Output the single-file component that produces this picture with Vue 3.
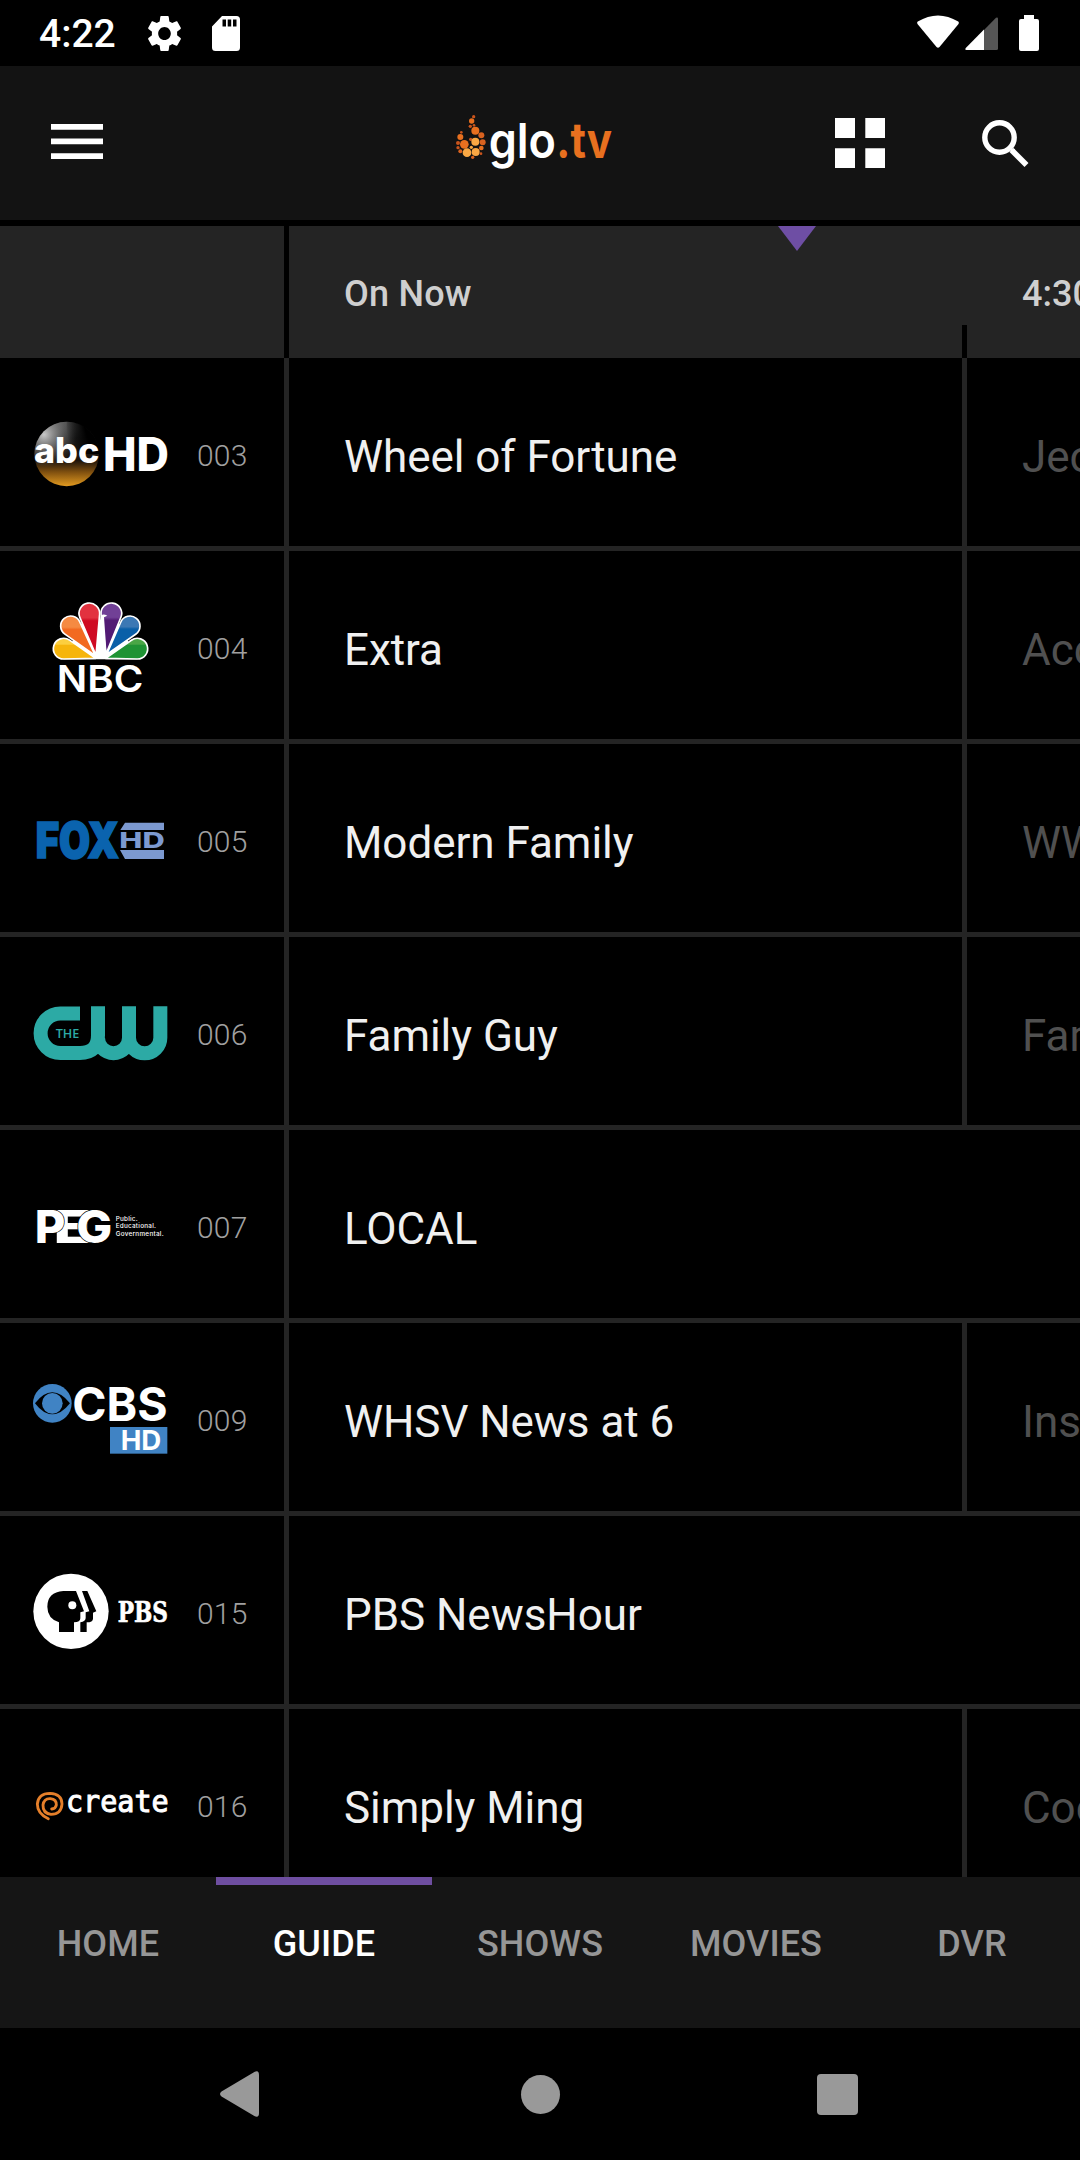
<template>
  <div class="screen">
    <div class="status-bar">
      <span class="clock">4:22</span>
      <svg class="gear" viewBox="2.6 2.4 18.8 19.2" preserveAspectRatio="none">
        <path fill="#fff" d="M19.14 12.94c.04-.3.06-.61.06-.94 0-.32-.02-.64-.07-.94l2.03-1.58c.18-.14.23-.41.12-.61l-1.92-3.32c-.12-.22-.37-.29-.59-.22l-2.39.96c-.5-.38-1.03-.7-1.62-.94l-.36-2.54c-.04-.24-.24-.41-.48-.41h-3.84c-.24 0-.43.17-.47.41l-.36 2.54c-.59.24-1.13.57-1.62.94l-2.39-.96c-.22-.08-.47 0-.59.22L2.74 8.87c-.12.21-.08.47.12.61l2.03 1.58c-.05.3-.09.63-.09.94s.02.64.07.94l-2.03 1.58c-.18.14-.23.41-.12.61l1.92 3.32c.12.22.37.29.59.22l2.39-.96c.5.38 1.03.7 1.62.94l.36 2.54c.05.24.24.41.48.41h3.84c.24 0 .44-.17.47-.41l.36-2.54c.59-.24 1.13-.56 1.62-.94l2.39.96c.22.08.47 0 .59-.22l1.92-3.32c.12-.22.07-.47-.12-.61l-2.01-1.58zM12 15.6c-1.98 0-3.6-1.62-3.6-3.6s1.62-3.6 3.6-3.6 3.6 1.62 3.6 3.6-1.62 3.6-3.6 3.6z" />
      </svg>
      <svg class="sd-card" viewBox="0 0 28 35">
        <path fill="#fff" fill-rule="evenodd" d="M10 0H24.5Q28 0 28 3.5V31.500Q28 35 24.500 35H3.500Q0 35 0 31.500V10.500ZM10.500 3.500V10.500H14V3.500ZM15.700 3.500V10.500H19.200V3.500ZM21 3.500V10.500H24.500V3.500Z" />
      </svg>
      <svg class="wifi" viewBox="0 0 42 33">
        <path fill="#fff" d="M.8 6.500Q21 -5.500 41.200 6.500Q42.300 7.500 41.500 9L22.500 32Q21 33.500 19.500 32L.5 9Q-.3 7.500 .8 6.500Z" />
      </svg>
      <svg class="signal" viewBox="0 0 33 33">
        <path fill="#565656" d="M19 13L31 .8Q33 0 33 2V31.500Q33 33 31.500 33H19Z" />
        <path fill="#fff" d="M19 12.500V33H1.500Q-.5 33 .8 31Z" />
      </svg>
      <svg class="battery" viewBox="0 0 20 36">
        <path fill="#fff" d="M5 0H15V4H18Q20 4 20 6V34Q20 36 18 36H2Q0 36 0 34V6Q0 4 2 4H5Z" />
      </svg>
    </div>

    <header class="app-bar">
      <svg class="menu-icon" viewBox="0 0 52 35">
        <path fill="#fff" d="M0 0H52V5.700H0ZM0 14.500H52V20.200H0ZM0 29.200H52V35H0Z" />
      </svg>
      <svg class="brand" viewBox="0 0 660 300">
        <circle v-for="(dot, i) in flameDots" :key="i" :cx="dot[0]" :cy="dot[1]" :r="dot[2]" :fill="dot[3]" />
        <text class="brand-text" x="176" y="204" textLength="202" lengthAdjust="spacingAndGlyphs" fill="#fff">glo</text>
        <text class="brand-text brand-tv" x="379" y="204" textLength="167" lengthAdjust="spacingAndGlyphs" fill="#e8701f">.tv</text>
      </svg>
      <svg class="grid-icon" viewBox="0 0 50 50">
        <path fill="#fff" d="M0 0H20V20H0ZM30.300 0H50V20H30.300ZM0 30.300H20V50H0ZM30.300 30.300H50V50H30.300Z" />
      </svg>
      <svg class="search-icon" viewBox="0 0 47 47">
        <circle cx="17.500" cy="17.500" r="14.700" fill="none" stroke="#fff" stroke-width="5.400" />
        <path d="M29.500 30L44.500 45" stroke="#fff" stroke-width="5.600" />
        <circle cx="31" cy="31" r="2.400" fill="#fff" />
      </svg>
    </header>

    <div class="time-row">
      <div class="time-corner"></div>
      <div class="time-line">
        <span class="time-now">On Now</span>
        <span class="time-next">4:30 PM</span>
        <i class="now-marker"></i>
        <i class="time-tick"></i>
      </div>
    </div>

    <main class="guide">
      <div v-for="channel in channels" :key="channel.number" class="guide-row">
        <div class="channel">
          <svg v-if="channel.logo === 'abc'" class="logo" viewBox="90 -66 420 564">
            <defs>
              <linearGradient id="abcBase" x1="0" y1="0" x2="0" y2="1">
                <stop offset="0" stop-color="#4a4a4a" />
                <stop offset=".25" stop-color="#202020" />
                <stop offset=".6" stop-color="#1c130b" />
                <stop offset=".78" stop-color="#80500f" />
                <stop offset="1" stop-color="#e39b20" />
              </linearGradient>
              <radialGradient id="abcShine" cx=".15" cy=".2" r=".5">
                <stop offset="0" stop-color="#c8c8c8" />
                <stop offset="1" stop-color="#777" stop-opacity="0" />
              </radialGradient>
              <linearGradient id="abcShade" x1="0" y1=".4" x2=".7" y2=".2">
                <stop offset="0" stop-color="#000" stop-opacity="0" />
                <stop offset=".8" stop-color="#000" />
              </linearGradient>
            </defs>
            <circle cx="200" cy="222" r="97" fill="url(#abcBase)" />
            <circle cx="200" cy="222" r="97" fill="url(#abcShine)" />
            <path d="M200 124A98 98 0 0 1 298 222H200Z" fill="url(#abcShade)" />
            <text class="geo" x="102" y="250" font-size="105" textLength="196" lengthAdjust="spacingAndGlyphs">abc</text>
            <text class="geo" x="309" y="273" font-size="140" textLength="198" lengthAdjust="spacingAndGlyphs">HD</text>
          </svg>

          <svg v-else-if="channel.logo === 'nbc'" class="logo" viewBox="90 -57 420 564">
            <defs>
              <linearGradient v-for="f in feathers" :id="f.id" :key="f.id" x1="0" y1="0" x2="0" y2="1">
                <stop offset="0" :stop-color="f.light" />
                <stop offset=".28" :stop-color="f.light" />
                <stop offset=".34" :stop-color="f.dark" />
                <stop offset="1" :stop-color="f.dark" />
              </linearGradient>
            </defs>
            <path d="M190 268H413L340 130L302 150L260 130Z" fill="#fff" />
            <path v-for="f in feathers" :key="f.id" :d="featherPath(f)" :fill="`url(#${f.id})`" stroke="#fff" stroke-width="5" stroke-linejoin="round" />
            <path d="M285 266L301 143Q304 128 322 137L312 142L321 266Z" fill="#fff" />
            <text class="mont" x="170" y="365" font-size="110" textLength="260" lengthAdjust="spacingAndGlyphs">NBC</text>
          </svg>

          <svg v-else-if="channel.logo === 'fox'" class="logo" viewBox="90 -108 420 564">
            <text class="fox" x="107" y="235" font-size="147" textLength="250" lengthAdjust="spacingAndGlyphs">FOX</text>
            <path d="M375 128H492V150H361ZM360 210H492V237H375Z" fill="#7c99d0" />
            <text class="fox-hd" x="358" y="204" font-size="65" textLength="136" lengthAdjust="spacingAndGlyphs">HD</text>
          </svg>

          <svg v-else-if="channel.logo === 'cw'" class="logo" viewBox="90 -99 420 564">
            <path d="M240 130.500H181A59 59 0 0 0 181 249H240Q294 249 294 196V109M294 203A46.500 46.500 0 0 0 387 203V109M387 203A47 47 0 0 0 481 203V109" fill="none" stroke="#2caaa5" stroke-width="42" />
            <text class="the" x="167" y="204" font-size="38" textLength="71" lengthAdjust="spacingAndGlyphs">THE</text>
          </svg>

          <svg v-else-if="channel.logo === 'peg'" class="logo" viewBox="90 -150 420 564">
            <text class="peg" x="160" y="188" font-size="136" textLength="116" lengthAdjust="spacingAndGlyphs">E</text>
            <text class="peg" x="104" y="188" font-size="136" textLength="92" lengthAdjust="spacingAndGlyphs">P</text>
            <text class="peg" x="229" y="188" font-size="136" textLength="108" lengthAdjust="spacingAndGlyphs">G</text>
            <text class="peg-small" x="347" y="122" font-size="19" textLength="66">Public.</text>
            <text class="peg-small" x="347" y="145" font-size="19" textLength="121">Educational.</text>
            <text class="peg-small" x="347" y="168" font-size="19" textLength="144">Governmental.</text>
          </svg>

          <svg v-else-if="channel.logo === 'cbs'" class="logo" viewBox="90 -111 420 564">
            <circle cx="157" cy="130" r="58" fill="#4083c4" />
            <path d="M105 130Q130 97 157 97Q184 97 210 130Q184 163 157 163Q130 163 105 130Z" fill="#000" />
            <circle cx="157" cy="130" r="31" fill="#4083c4" />
            <text class="mont heavy" x="217" y="184" font-size="139" textLength="286" lengthAdjust="spacingAndGlyphs">CBS</text>
            <rect x="330" y="201" width="172" height="80" fill="#4083c4" />
            <text class="mont heavy" x="362" y="271" font-size="80" textLength="122" lengthAdjust="spacingAndGlyphs">HD</text>
          </svg>

          <svg v-else-if="channel.logo === 'pbs'" class="logo" viewBox="90 -102 420 564">
            <circle cx="213" cy="184" r="113" fill="#fff" />
            <path d="M228 123H190Q142 127 142 170Q142 205 177 217V246H222V217Q241 217 241 205V187L252 184Z" fill="#000" />
            <path d="M246 123H262L289 184L279 188V206Q279 217 260 217V246H241V217Q257 214 257 204V187L268 184Z" fill="#000" />
            <circle cx="217" cy="166" r="12" fill="#fff" />
            <text class="slab" x="353" y="216" font-size="85" textLength="151" lengthAdjust="spacingAndGlyphs">PBS</text>
          </svg>

          <svg v-else class="logo" viewBox="90 -93 420 564">
            <path d="M145 236Q112 221 112 192Q115 160 150 160Q186 162 186 192Q184 223 153 223Q128 220 129 195Q132 175 151 176Q170 178 169 195Q167 206 155 207" fill="none" stroke="#e57f2a" stroke-width="8.500" stroke-linecap="round" />
            <text class="create" x="198" y="217" font-size="88" textLength="308" lengthAdjust="spacingAndGlyphs">create</text>
          </svg>
          <span class="number">{{ channel.number }}</span>
        </div>
        <div class="program" :class="{ wide: !channel.next }">{{ channel.now }}</div>
        <div v-if="channel.next" class="program next">{{ channel.next }}</div>
      </div>
    </main>

    <nav class="tabs">
      <a v-for="tab in tabs" :key="tab" class="tab" :class="{ active: tab === activeTab }" @click="activeTab = tab">{{ tab }}</a>
    </nav>

    <div class="system-nav">
      <svg class="sys-back" viewBox="0 0 39 46">
        <path fill="#999" d="M33.500 1.500Q39 -2 39 4V42Q39 48 33.500 44.500L1.500 25.500Q-1.500 23 1.500 20.500Z" />
      </svg>
      <i class="sys-home"></i>
      <i class="sys-recent"></i>
    </div>
  </div>
</template>

<script setup>
import { ref } from 'vue';

const tabs = ['HOME', 'GUIDE', 'SHOWS', 'MOVIES', 'DVR'];
const activeTab = ref('GUIDE');

const channels = [
  { logo: 'abc', number: '003', now: 'Wheel of Fortune', next: 'Jeopardy!' },
  { logo: 'nbc', number: '004', now: 'Extra', next: 'Access' },
  { logo: 'fox', number: '005', now: 'Modern Family', next: 'WWE' },
  { logo: 'cw', number: '006', now: 'Family Guy', next: 'Family Guy' },
  { logo: 'peg', number: '007', now: 'LOCAL' },
  { logo: 'cbs', number: '009', now: 'WHSV News at 6', next: 'Inside Edition' },
  { logo: 'pbs', number: '015', now: 'PBS NewsHour' },
  { logo: 'create', number: '016', now: 'Simply Ming', next: 'Cook' },
];

// x, y, radius, color
const flameDots = [
  [131, 80, 5, '#c9541c'],
  [125, 93, 8, '#e8701f'],
  [121, 109, 5, '#c9541c'],
  [132, 106, 4, '#c9541c'],
  [136, 122, 12, '#e8701f'],
  [154, 136, 9, '#d9621f'],
  [94, 127, 4, '#c9541c'],
  [91, 141, 9, '#e8701f'],
  [84, 159, 6, '#c9541c'],
  [103, 163, 13, '#e8701f'],
  [122, 148, 5, '#c9541c'],
  [136, 155, 12, '#f9a844'],
  [158, 157, 9, '#d9621f'],
  [84, 173, 5, '#c9541c'],
  [91, 184, 6, '#d9621f'],
  [111, 188, 13, '#f9a844'],
  [137, 186, 12, '#f9a844'],
  [154, 174, 7, '#e8701f'],
  [124, 172, 5, '#f9a844'],
  [128, 202, 5, '#d9621f'],
  [153, 191, 4, '#c9541c'],
];

const feathers = [
  { id: 'yellow', x: 191, y: 236, r: 31, tx: 287, ty: 265, light: '#fccf3e', dark: '#f6b50c' },
  { id: 'green', x: 412, y: 236, r: 31, tx: 317, ty: 265, light: '#4aa646', dark: '#1f9334' },
  { id: 'orange', x: 212, y: 168, r: 30, tx: 286, ty: 257, light: '#f58a42', dark: '#f26a21' },
  { id: 'blue', x: 390, y: 168, r: 30, tx: 320, ty: 253, light: '#3c78b4', dark: '#0a5fa8' },
  { id: 'red', x: 268, y: 130, r: 31, tx: 288, ty: 256, light: '#e2323f', dark: '#cf0a22' },
  { id: 'purple', x: 334, y: 130, r: 31, tx: 318, ty: 252, light: '#714096', dark: '#521a74' },
];

// teardrop: tip joined to the circle by its two tangents
const featherPath = ({ x, y, r, tx, ty }) => {
  const d = Math.hypot(tx - x, ty - y);
  const ux = (tx - x) / d;
  const uy = (ty - y) / d;
  const c = r / d;
  const s = Math.sqrt(1 - c * c);
  const p1 = [x + r * (c * ux - s * uy), y + r * (c * uy + s * ux)];
  const p2 = [x + r * (c * ux + s * uy), y + r * (c * uy - s * ux)];
  return `M${tx} ${ty}L${p1.join(' ')}A${r} ${r} 0 1 1 ${p2.join(' ')}Z`;
};
</script>

<style>
body {
  margin: 0;
  background-color: #000;
}
</style>

<style scoped>
.screen {
  width: 1080px;
  height: 2160px;
  display: flex;
  flex-direction: column;
  overflow: hidden;
  background-color: #000;
  color: #fff;
  font-family: Roboto, "Noto Sans", sans-serif;
}

svg {
  display: block;
  flex: none;
}

.status-bar {
  height: 66px;
  flex: none;
  display: flex;
  align-items: center;
  box-sizing: border-box;
  padding: 0 41px 0 39px;
}

.clock {
  width: 109px;
  font-size: 39px;
  font-weight: 500;
  line-height: 66px;
  padding-top: 2px;
}

.gear {
  width: 33px;
  height: 35px;
}

.sd-card {
  width: 28px;
  height: 35px;
  margin-left: 31px;
  margin-right: auto;
}

.wifi {
  width: 42px;
  height: 33px;
  margin-bottom: 3px;
}

.signal {
  width: 33px;
  height: 33px;
  margin-left: 6px;
}

.battery {
  width: 20px;
  height: 36px;
  margin-left: 21px;
}

.app-bar {
  height: 154px;
  flex: none;
  display: flex;
  align-items: center;
  padding-left: 51px;
  background-color: #131313;
}

.menu-icon {
  width: 52px;
  height: 35px;
  margin-bottom: 3px;
}

.brand {
  width: 220px;
  height: 100px;
  margin-left: 327px;
  margin-bottom: 6px;
}

.brand-text {
  font-family: Inter, sans-serif;
  font-weight: 600;
  font-size: 146px;
}

.brand-tv {
  font-weight: 700;
}

.grid-icon {
  width: 50px;
  height: 50px;
  margin-left: 185px;
}

.search-icon {
  width: 47px;
  height: 47px;
  margin-left: 97px;
}

.time-row {
  height: 132px;
  flex: none;
  display: flex;
  gap: 5px;
  margin-top: 6px;
  font-size: 36px;
  font-weight: 500;
  color: #cfcfcf;
}

.time-corner {
  width: 284px;
  background-color: #242424;
}

.time-line {
  position: relative;
  flex: 1;
  display: flex;
  line-height: 136px;
  padding-left: 55px;
  overflow: hidden;
  white-space: nowrap;
  background-color: #242424;
}

.time-now {
  width: 678px;
  flex: none;
  letter-spacing: 0.2px;
}

.time-next {
  flex: none;
}

.now-marker {
  position: absolute;
  top: 0;
  left: 489px;
  border-left: 19px solid transparent;
  border-right: 19px solid transparent;
  border-top: 25px solid #6e4ea4;
}

.time-tick {
  position: absolute;
  left: 673px;
  bottom: 0;
  width: 5px;
  height: 33px;
  background-color: #000;
}

.guide {
  height: 1519px;
  flex: none;
  overflow: hidden;
}

.guide-row {
  height: 188px;
  display: flex;
  border-bottom: 5px solid #242424;
}

.channel {
  width: 284px;
  flex: none;
  display: flex;
  box-sizing: border-box;
  padding-left: 30px;
}

.logo {
  width: 140px;
  height: 188px;
}

.number {
  margin-left: 27px;
  font-size: 30px;
  font-weight: 300;
  line-height: 195px;
  letter-spacing: 0.2px;
  color: #a0a0a0;
}

.program {
  width: 618px;
  height: 188px;
  flex: none;
  padding-left: 55px;
  border-left: 5px solid #242424;
  font-size: 44px;
  line-height: 198px;
  letter-spacing: -0.05px;
  color: #f0f0f0;
  white-space: nowrap;
}

.program.wide {
  width: 736px;
}

.program.next {
  width: 58px;
  padding-left: 55px;
  overflow: hidden;
  color: #505050;
}

.tabs {
  height: 151px;
  flex: none;
  display: flex;
  background-color: #151515;
}

.tab {
  position: relative;
  width: 216px;
  text-align: center;
  font-size: 36px;
  font-weight: 500;
  line-height: 134px;
  letter-spacing: 0.1px;
  color: #969696;
  cursor: pointer;
}

.tab.active {
  color: #fff;
}

.tab.active::before {
  content: "";
  position: absolute;
  top: 0;
  left: 0;
  width: 216px;
  height: 8px;
  background-color: #6e4ea0;
}

.system-nav {
  height: 132px;
  flex: none;
  display: flex;
  align-items: center;
  padding-left: 220px;
}

.sys-back {
  width: 39px;
  height: 46px;
}

.sys-home {
  width: 39px;
  height: 39px;
  margin-left: 262px;
  border-radius: 50%;
  background-color: #999;
}

.sys-recent {
  width: 41px;
  height: 41px;
  margin-left: 257px;
  border-radius: 4px;
  background-color: #999;
}

.logo text {
  fill: #fff;
}

.logo .geo {
  font-family: Inter, sans-serif;
  font-weight: 800;
}

.logo .mont {
  font-family: Inter, sans-serif;
  font-weight: 600;
}

.logo .heavy {
  font-weight: 700;
}

.logo .fox {
  font-family: Inter, sans-serif;
  font-weight: 900;
  fill: #0a63ae;
  stroke: #0a63ae;
  stroke-width: 5px;
}

.logo .fox-hd {
  font-family: Inter, sans-serif;
  font-weight: 800;
  fill: #7c99d0;
}

.logo .the {
  font-family: "Open Sans", sans-serif;
  font-weight: 600;
  fill: #2caaa5;
}

.logo .peg {
  font-family: Inter, sans-serif;
  font-weight: 800;
  stroke: #000;
  stroke-width: 4px;
  paint-order: stroke;
}

.logo .peg-small {
  font-family: Inter, sans-serif;
  font-weight: 500;
}

.logo .slab {
  font-family: "DejaVu Serif", serif;
  font-weight: 700;
  stroke: #fff;
  stroke-width: 2px;
}

.logo .create {
  font-family: "DejaVu Sans Mono", monospace;
  stroke: #fff;
  stroke-width: 3px;
}
</style>
